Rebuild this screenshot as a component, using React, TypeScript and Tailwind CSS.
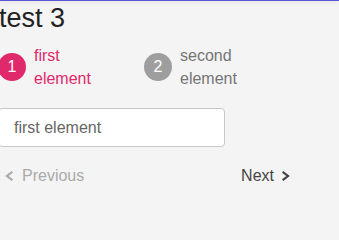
interface Step {
  num: number;
  label: string[];
  active: boolean;
}

const steps: Step[] = [
  { num: 1, label: ["first", "element"], active: true },
  { num: 2, label: ["second", "element"], active: false },
];

function Chevron({ dir, className }: { dir: "left" | "right"; className?: string }) {
  return (
    <svg width="8" height="10" viewBox="0 0 8 10" className={className} fill="none">
      <polyline
        points={dir === "right" ? "1.5,1.5 6,5 1.5,8.5" : "6.5,1.5 2,5 6.5,8.5"}
        stroke="currentColor"
        strokeWidth="2.2"
        strokeLinecap="square"
      />
    </svg>
  );
}

export default function App() {
  return (
    <div
      className="min-h-screen w-full overflow-hidden bg-[#f4f4f4]"
      style={{ fontFamily: '"Liberation Sans", Arial, sans-serif' }}
    >
      {/* top bar edge */}
      <div className="h-[1px] bg-[#5a54d6] shadow-[0_1px_4px_rgba(0,0,0,0.18)]" />

      <div className="ml-[-2px] w-[292px]">
        <h1 className="text-[27px] leading-[32px] text-[#222] mt-[1px] ml-[1px]">test 3</h1>

        {/* stepper */}
        <div className="flex mt-[10px]">
          {steps.map((s) => (
            <div key={s.num} className="flex items-center gap-[8px] w-[146px]">
              <div
                className={
                  s.active
                    ? "w-[28px] h-[28px] rounded-full bg-[#e0296b] text-white flex items-center justify-center text-[16px]"
                    : "w-[28px] h-[28px] rounded-full bg-[#9e9e9e] text-white flex items-center justify-center text-[16px]"
                }
              >
                {s.num}
              </div>
              <div
                className={
                  s.active
                    ? "text-[16px] leading-[23px] text-[#e0296b]"
                    : "text-[16px] leading-[23px] text-[#757575]"
                }
              >
                {s.label.map((l) => (
                  <div key={l}>{l}</div>
                ))}
              </div>
            </div>
          ))}
        </div>

        {/* input */}
        <div className="mt-[18px] w-[227px] h-[39px] bg-white border border-[#c8c8c8] rounded-[4px] flex items-center pl-[15px] text-[16px] text-[#666]">
          first element
        </div>

        {/* navigation */}
        <div className="flex items-center justify-between mt-[17px] pl-[7px]">
          <button className="flex items-center gap-[9px] text-[16px] text-[#aaaaaa]">
            <Chevron dir="left" />
            <span>Previous</span>
          </button>
          <button className="flex items-center gap-[8px] text-[16px] text-[#444]">
            <span>Next</span>
            <Chevron dir="right" />
          </button>
        </div>
      </div>
    </div>
  );
}
